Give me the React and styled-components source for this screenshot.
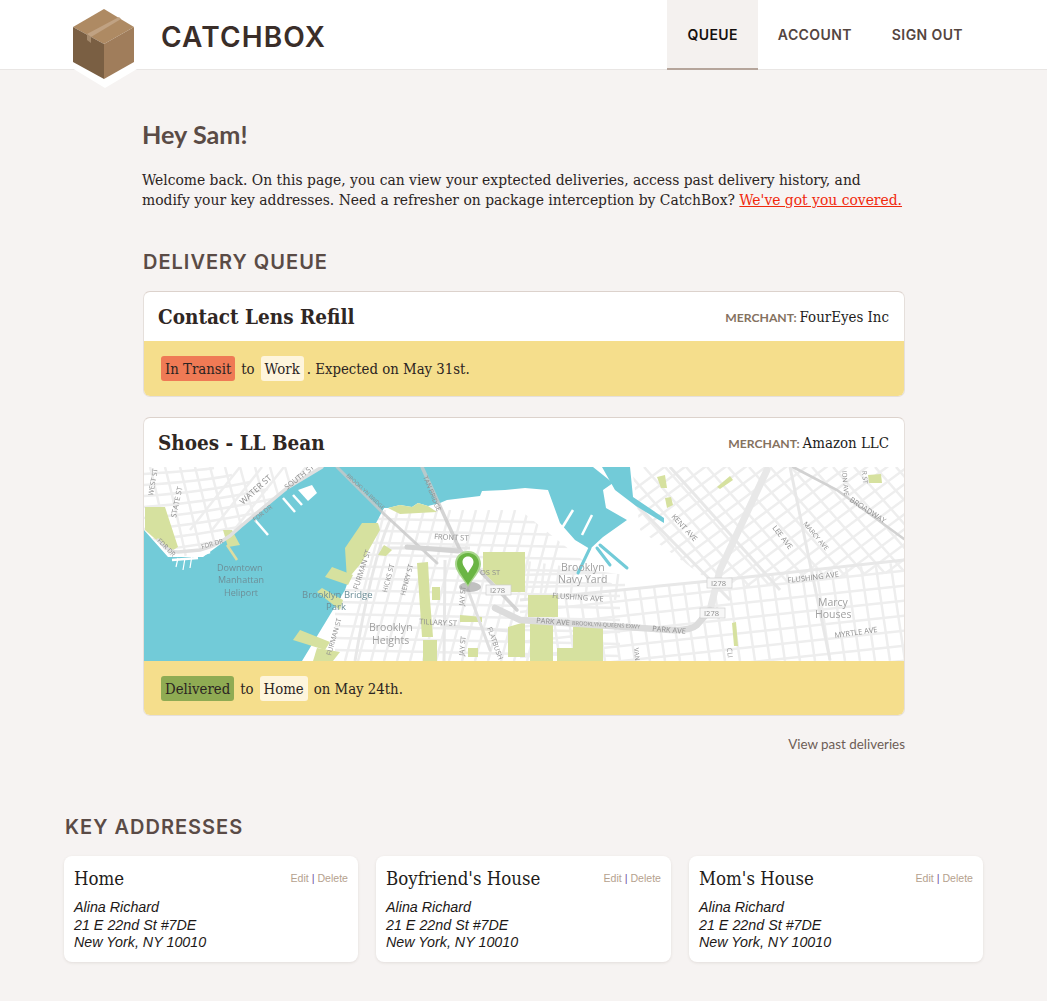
import React from "react";
import styled, { createGlobalStyle } from "styled-components";

const SLAB = `"DejaVu Serif Condensed", "DejaVu Serif", serif`;
const GEO = `"Inter", "Liberation Sans", sans-serif`;

const Global = createGlobalStyle`
  html, body { margin: 0; padding: 0; background: #f6f3f2; }
  body { font-family: ${SLAB}; color: #2f2724; }
`;

const Header = styled.header`
  position: relative;
  z-index: 2;
  height: 70px;
  box-sizing: border-box;
  padding: 0 64px;
  background: #fff;
  border-bottom: 1px solid #e9e6e4;
  display: flex;
  justify-content: space-between;
`;
const Brand = styled.div`
  display: flex;
  align-items: flex-start;
  gap: 22px;
`;
const Logo = styled.svg`
  width: 75px;
  height: 88px;
  flex: none;
  display: block;
`;
const BrandName = styled.div`
  font-family: ${GEO};
  font-size: 28px;
  font-weight: 600;
  letter-spacing: 1.15px;
  color: #3a2e29;
  line-height: 74px;
`;
const Nav = styled.nav`
  display: flex;
  height: 70px;
`;
const NavItem = styled.a`
  display: flex;
  align-items: center;
  box-sizing: border-box;
  padding: 0 20px;
  height: 70px;
  font-family: ${GEO};
  font-size: 14px;
  font-weight: 600;
  letter-spacing: 0.4px;
  color: ${(p) => (p.$active ? "#15100e" : "#54453f")};
  background: ${(p) => (p.$active ? "#f4f1ef" : "transparent")};
  border-bottom: 2px solid ${(p) => (p.$active ? "#b5a59b" : "transparent")};
`;
const Main = styled.main`
  width: 763px;
  margin-left: 142px;
  padding-top: 49px;
`;
const Greeting = styled.h1`
  margin: 0;
  font-family: "Lato", sans-serif;
  font-size: 25.2px;
  line-height: 30px;
  font-weight: 700;
  color: #5a4b46;
`;
const Intro = styled.p`
  margin: 21px 0 0;
  font-size: 15.45px;
  line-height: 20px;
  color: #2b2422;
  width: 763px;
`;
const RedLink = styled.a`
  color: #f0290d;
  text-decoration: underline;
`;
const SectionTitle = styled.h2`
  margin: ${(p) => p.$top}px 0 0 1px;
  font-family: ${GEO};
  font-size: 20px;
  line-height: 26px;
  font-weight: 600;
  letter-spacing: 1px;
  color: #5a4b46;
`;
const Card = styled.section`
  margin: ${(p) => p.$top}px 0 0 1px;
  border-radius: 7px;
  border: 1px solid #e5dfdb;
  border-top-color: #dcd2cc;
  overflow: hidden;
  background: #fff;
  width: 762px;
  box-sizing: border-box;
`;
const CardHead = styled.div`
  height: 49px;
  padding: 0 15px 0 14px;
  display: flex;
  align-items: center;
  justify-content: space-between;
`;
const CardTitle = styled.h3`
  margin: 0;
  font-size: 20.5px;
  font-weight: 700;
  color: #2f2724;
`;
const Merchant = styled.div`
  font-size: 14.9px;
  color: #221c1a;
`;
const MerchantLabel = styled.span`
  font-family: "Lato", sans-serif;
  font-size: 12.2px;
  font-weight: 700;
  color: #85725f;
  margin-right: 3px;
`;
const Band = styled.div`
  height: ${(p) => p.$h}px;
  padding-left: 17px;
  background: #f5de8c;
  display: flex;
  align-items: center;
  font-size: 14.8px;
  color: #2b2422;
`;
const Pill = styled.span`
  display: inline-flex;
  align-items: center;
  height: 25px;
  padding: 0 4px;
  border-radius: 3px;
  background: ${(p) => p.$bg};
  margin-right: ${(p) => p.$after}px;
`;
const To = styled.span`
  margin-right: 6px;
`;
const MapBox = styled.svg`
  width: 760px;
  height: 194px;
  display: block;
`;
const PastLink = styled.a`
  display: block;
  text-align: right;
  margin-top: 19px;
  font-family: "Lato", sans-serif;
  font-size: 13.4px;
  line-height: 18px;
  color: #6d5d56;
`;
const AddressSection = styled.section`
  padding: 0 64px 39px;
`;
const AddressGrid = styled.div`
  margin-top: 16px;
  display: grid;
  grid-template-columns: 294px 295px 294px;
  column-gap: 18px;
`;
const AddressCard = styled.article`
  height: 106px;
  box-sizing: border-box;
  padding: 10px;
  background: #fff;
  border-radius: 8px;
  box-shadow: 0 1px 3px rgba(90, 70, 60, 0.12);
`;
const AddressHead = styled.div`
  display: flex;
  justify-content: space-between;
  align-items: center;
  height: 24px;
`;
const AddressName = styled.h4`
  margin: 0;
  font-size: 18.5px;
  font-weight: 400;
  color: #221c1a;
`;
const Actions = styled.div`
  font-family: "Liberation Sans", sans-serif;
  font-size: 10.6px;
  color: #6b4fa0;
`;
const Action = styled.a`
  color: #b5a18e;
`;
const AddressLines = styled.address`
  margin-top: 9px;
  font-family: "Liberation Sans", sans-serif;
  font-style: italic;
  font-size: 14.3px;
  line-height: 17.5px;
  color: #1d1917;
`;
const MapLabel = styled.text`
  font-family: "Open Sans", sans-serif;
  fill: #8f8f8f;
`;
const PlaceLabel = styled.text`
  font-family: "Open Sans", sans-serif;
`;

const range = (n, f) => Array.from({ length: n }, (_, i) => f(i));
const ROAD = "#eeeeee";
const PARK = "#d6e19f";
const WATER = "#72cbd8";

const parks = [
  "145,507 165,507 178,547 170,552 145,530",
  "345,548 362,523 378,523 380,530 362,562 347,580",
  "325,577 332,567 353,575 348,585",
  "317,592 322,588 343,600 340,610",
  "293,640 300,630 330,642 325,650",
  "313,661 317,648 340,652 333,661",
  "388,508 400,505 412,507 418,503 428,506 437,512 400,514",
  "378,555 384,545 392,550 386,556",
  "417,563 428,562 430,600 433,637 422,637",
  "423,640 437,640 437,661 423,661",
  "432,587 440,587 440,600 432,600",
  "483,552 525,552 525,592 503,592 483,572",
  "528,595 558,595 558,617 528,617",
  "530,623 553,623 553,661 530,661",
  "573,627 603,627 603,661 573,661",
  "557,648 575,648 575,661 557,661",
  "460,615 482,617 482,622 460,622",
  "468,648 478,648 478,657 468,657",
  "508,627 525,622 525,657 508,657",
  "657,477 665,475 667,488 661,488",
  "665,498 671,497 673,505 667,508",
  "717,487 730,476 733,480 720,489",
  "868,475 881,474 882,483 869,483",
  "732,623 736,622 738,646 734,646",
  "223,530 232,530 240,545 228,547",
];

const labels = [
  ["WEST ST", 153, 496, -80, 7],
  ["STATE ST", 176, 518, -78, 7.5],
  ["WATER ST", 243, 505, -42, 8.5],
  ["SOUTH ST", 287, 490, -38, 7.5],
  ["FDR DR", 255, 522, -38, 6.5],
  ["FDR DR", 202, 549, -16, 6.5],
  ["FDR DR", 157, 541, 45, 6.5],
  ["BROOKLYN BRIDGE", 346, 476, 43, 5.5],
  ["TAN BRIDGE", 423, 477, 68, 6.5],
  ["FRONT ST", 434, 539, 3, 7.5],
  ["OS ST", 480, 575, 0, 7.5],
  ["FURMAN ST", 358, 590, -72, 7.5],
  ["FURMAN ST", 331, 656, -74, 7],
  ["HICKS ST", 387, 593, -75, 7],
  ["HENRY ST", 405, 596, -75, 7],
  ["JAY ST", 464, 606, -85, 7],
  ["JAY ST", 464, 656, -85, 7],
  ["TILLARY ST", 419, 624, 3, 7.5],
  ["FLATBUSH", 487, 628, 70, 7],
  ["KENT AVE", 671, 517, 47, 7.5],
  ["LEE AVE", 772, 528, 52, 7.5],
  ["MARCY AVE", 803, 524, 50, 6.5],
  ["BROADWAY", 849, 501, 33, 7.5],
  ["ION AVE", 842, 471, 85, 6.5],
  ["R ST", 862, 471, 85, 6.5],
  ["FLUSHING AVE", 788, 583, -7, 7.5],
  ["FLUSHING AVE", 552, 598, 4, 7.5],
  ["PARK AVE", 536, 623, 4, 7.5],
  ["BROOKLYN-QUEENS EXWY", 572, 625, 3, 5.5],
  ["PARK AVE", 652, 631, 5, 7.5],
  ["MYRTLE AVE", 835, 638, -8, 7.5],
  ["VAN", 634, 648, 85, 6.5],
  ["CLI", 727, 648, 85, 7],
];

const places = [
  ["Brooklyn", 561, 571, 10.5, "#a0a0a0"],
  ["Navy Yard", 558, 583, 10.5, "#a0a0a0"],
  ["Brooklyn", 369, 631, 10.5, "#a0a0a0"],
  ["Heights", 372, 644, 10.5, "#a0a0a0"],
  ["Marcy", 818, 606, 10.5, "#a0a0a0"],
  ["Houses", 815, 618, 10.5, "#a0a0a0"],
  ["Downtown", 217, 571, 9, "#6d8f98"],
  ["Manhattan", 218, 583, 9, "#6d8f98"],
  ["Heliport", 224, 596, 9, "#6d8f98"],
  ["Brooklyn Bridge", 302, 598, 9.5, "#6d8f98"],
  ["Park", 326, 610, 9.5, "#6d8f98"],
];

const shields = [
  [486, 593],
  [707, 586],
  [700, 616],
];

const StreetMap = () => (
  <MapBox viewBox="144 467 760 194" role="img" aria-label="Delivery map">
    <defs>
      <clipPath id="upperRight">
        <polygon points="632,467 904,467 904,572 722,590 640,530" />
      </clipPath>
      <clipPath id="lowerRight">
        <polygon points="520,600 904,562 904,661 520,661" />
      </clipPath>
      <clipPath id="heights">
        <polygon points="340,510 520,510 620,590 620,661 330,661" />
      </clipPath>
      <clipPath id="navy">
        <polygon points="520,560 625,575 625,600 520,600" />
      </clipPath>
      <clipPath id="manhattan">
        <polygon points="144,467 330,467 240,535 175,560 144,530" />
      </clipPath>
      <filter id="soft">
        <feGaussianBlur stdDeviation="0.4" />
      </filter>
    </defs>
    <rect x="144" y="467" width="760" height="194" fill="#fff" />
    <g filter="url(#soft)">
      <g stroke={ROAD} strokeWidth="2.5" fill="none">
        <g clipPath="url(#manhattan)">
          {range(10, (i) => (
            <path key={i} d={`M${150 + i * 15} 467 q 8 30 ${20 + i} 90`} />
          ))}
          {range(8, (i) => (
            <path key={i} d={`M144 ${474 + i * 11} q 60 -4 ${70 + i * 18} -${6 + i * 4}`} />
          ))}
          {range(6, (i) => (
            <path key={i} d={`M${190 + i * 22} 530 L${240 + i * 22} 467`} />
          ))}
        </g>
        <g clipPath="url(#heights)">
          {range(15, (i) => (
            <line key={i} x1={385 + i * 13} y1="510" x2={345 + i * 13} y2="661" />
          ))}
          {range(13, (i) => (
            <line key={i} x1="335" y1={518 + i * 12} x2="620" y2={524 + i * 12} />
          ))}
        </g>
        <g clipPath="url(#navy)">
          {range(7, (i) => (
            <line key={i} x1={530 + i * 15} y1="560" x2={525 + i * 15} y2="600" />
          ))}
          <line x1="520" y1="587" x2="625" y2="585" />
          <line x1="520" y1="575" x2="625" y2="572" />
        </g>
        <g clipPath="url(#upperRight)">
          {range(18, (i) => (
            <line key={i} x1={560 + i * 21} y1="467" x2={695 + i * 21} y2="620" />
          ))}
          {range(28, (i) => (
            <line key={i} x1="620" y1={500 + i * 15} x2="910" y2={285 + i * 15} />
          ))}
        </g>
        <g clipPath="url(#lowerRight)">
          {range(26, (i) => (
            <line key={i} x1={530 + i * 15} y1="560" x2={545 + i * 15} y2="661" />
          ))}
          {range(8, (i) => (
            <line key={i} x1="520" y1={612 + i * 15} x2="910" y2={570 + i * 15} />
          ))}
        </g>
      </g>
      <g stroke="#e8e8e8" strokeWidth="3" fill="none">
        <line x1="622" y1="490" x2="730" y2="600" />
        <line x1="670" y1="467" x2="780" y2="590" />
        <line x1="790" y1="467" x2="830" y2="660" />
        <line x1="520" y1="600" x2="720" y2="580" />
        <line x1="720" y1="580" x2="904" y2="560" />
        <line x1="380" y1="548" x2="470" y2="548" />
        <line x1="440" y1="625" x2="520" y2="632" />
        <path d="M390 520 Q372 560 355 661" />
        <line x1="445" y1="560" x2="444" y2="661" />
      </g>
      <polygon
        fill={WATER}
        points="322,467 593,467 613,483 603,490 606,508 627,520 603,537 590,549 575,540 560,523 548,490 525,488 505,490 482,491 480,496 447,500 440,503 428,506 418,503 412,507 400,505 388,508 384,508 375,525 352,570 345,590 302,661 144,661 144,530 168,557 203,557 222,543 237,530 287,488"
      />
      <polygon fill={WATER} points="602,467 630,467 633,497 664,518 664,523 636,506 615,490" />
      <g stroke={WATER} strokeWidth="3" strokeLinecap="round">
        <line x1="600" y1="545" x2="627" y2="568" />
        <line x1="597" y1="548" x2="610" y2="565" />
        <line x1="590" y1="548" x2="578" y2="573" />
      </g>
      <g stroke="#fff" strokeWidth="2.5">
        <line x1="283" y1="498" x2="295" y2="512" />
        <line x1="293" y1="495" x2="302" y2="505" />
        <line x1="255" y1="520" x2="268" y2="535" />
        <line x1="197" y1="556" x2="210" y2="552" />
        <line x1="172" y1="560" x2="198" y2="558" />
        <line x1="192" y1="555" x2="190" y2="568" strokeWidth="1.2" />
        <line x1="185" y1="558" x2="183" y2="570" strokeWidth="1.2" />
        <line x1="178" y1="558" x2="176" y2="567" strokeWidth="1.2" />
        <line x1="573" y1="510" x2="562" y2="528" />
        <line x1="592" y1="515" x2="582" y2="535" />
      </g>
      <polygon fill="#fff" points="298,490 312,485 317,493 308,501" />
      {parks.map((p, i) => (
        <polygon key={i} points={p} fill={PARK} />
      ))}
      <line x1="227" y1="545" x2="237" y2="560" stroke="#dfdca0" strokeWidth="2.5" />
      <g fill="none" strokeLinecap="round">
        <path d="M322 467 L287 488 L240 527 Q222 545 200 550 L178 552 Q168 552 158 540" stroke="#e0e0e0" strokeWidth="3.5" />
        <path d="M337 467 L383 513 L437 563" stroke="#c8c8c8" strokeWidth="3" opacity="0.8" />
        <path d="M422 467 L460 550 L517 610" stroke="#c9c9c9" strokeWidth="3.5" opacity="0.8" />
        <path d="M407 547 L458 551" stroke="#d4d4d4" strokeWidth="5" />
        <path d="M767 470 L720 570 L710 610" stroke="#e8e8e8" strokeWidth="7" />
        <path d="M710 610 L697 625 Q690 631 670 630 L520 620 L495 608" stroke="#dcdcdc" strokeWidth="6.5" />
        <path d="M793 467 L837 490 L904 539" stroke="#d2d2d2" strokeWidth="2.6" />
        <path d="M468 590 L490 650" stroke="#e0e0e0" strokeWidth="3" />
      </g>
    </g>
    {labels.map(([t, x, y, r, s], i) => (
      <MapLabel key={i} x={x} y={y} fontSize={s} transform={`rotate(${r} ${x} ${y})`}>
        {t}
      </MapLabel>
    ))}
    {places.map(([t, x, y, s, c], i) => (
      <PlaceLabel key={i} x={x} y={y} fontSize={s} fill={c}>
        {t}
      </PlaceLabel>
    ))}
    {shields.map(([x, y], i) => (
      <g key={i}>
        <rect x={x} y={y - 8} width="25" height="10" fill="#f7f7f7" stroke="#cfcfcf" strokeWidth="0.7" />
        <MapLabel x={x + 4} y={y} fontSize="7.5">
          I278
        </MapLabel>
      </g>
    ))}
    <ellipse cx="470" cy="587" rx="11" ry="5" fill="#8c8c8c" opacity="0.55" filter="url(#soft)" />
    <path
      d="M468 551 C459.5 551 455 557.5 455 564 C455 571 463 579 468 587 C473 579 481 571 481 564 C481 557.5 476.5 551 468 551 Z"
      fill="#a9d68e"
    />
    <path
      d="M468 553 C461 553 457 558 457 564 C457 570.5 464 578 468 585 C472 578 479 570.5 479 564 C479 558 475 553 468 553 Z"
      fill="#6ab544"
    />
    <path
      d="M468 556.5 C464.5 556.5 462.5 559 462.5 562 C462.5 565.5 466 569 468 573 C470 569 473.5 565.5 473.5 562 C473.5 559 471.5 556.5 468 556.5 Z"
      fill="#fff"
    />
  </MapBox>
);

const addresses = ["Home", "Boyfriend's House", "Mom's House"];

export default function App() {
  return (
    <>
      <Global />
      <Header>
        <Brand>
          <Logo viewBox="64 0 75 88">
            <polygon points="72,68 105,88 137,69 140,20 104,3 68,20" fill="#fff" />
            <polygon points="104,9 134,27 104,44 73,27" fill="#ae8a63" />
            <polygon points="73,27 104,44 104,79 73,62" fill="#7a5f43" />
            <polygon points="134,27 134,62 104,79 104,44" fill="#a07d5b" />
            <polygon points="87,34 119,17 121,19 91,37" fill="#c0a283" />
            <polygon points="87,34 91,37 91,43 87,40" fill="#a58a6d" />
          </Logo>
          <BrandName>CATCHBOX</BrandName>
        </Brand>
        <Nav>
          <NavItem $active>QUEUE</NavItem>
          <NavItem>ACCOUNT</NavItem>
          <NavItem>SIGN OUT</NavItem>
        </Nav>
      </Header>
      <Main>
        <Greeting>Hey Sam!</Greeting>
        <Intro>
          Welcome back. On this page, you can view your exptected deliveries, access past delivery history, and
          modify your key addresses. Need a refresher on package interception by CatchBox?{" "}
          <RedLink>We've got you covered.</RedLink>
        </Intro>
        <SectionTitle $top={39}>DELIVERY QUEUE</SectionTitle>
        <Card $top={16}>
          <CardHead>
            <CardTitle>Contact Lens Refill</CardTitle>
            <Merchant>
              <MerchantLabel>MERCHANT:</MerchantLabel>FourEyes Inc
            </Merchant>
          </CardHead>
          <Band $h={55}>
            <Pill $bg="#ef7a55" $after={6}>In Transit</Pill>
            <To>to</To>
            <Pill $bg="#fef5dc" $after={3}>Work</Pill>. Expected on May 31st.
          </Band>
        </Card>
        <Card $top={20}>
          <CardHead>
            <CardTitle>Shoes - LL Bean</CardTitle>
            <Merchant>
              <MerchantLabel>MERCHANT:</MerchantLabel>Amazon LLC
            </Merchant>
          </CardHead>
          <StreetMap />
          <Band $h={54}>
            <Pill $bg="#8fab53" $after={6}>Delivered</Pill>
            <To>to</To>
            <Pill $bg="#fef5dc" $after={6}>Home</Pill>on May 24th.
          </Band>
        </Card>
        <PastLink>View past deliveries</PastLink>
      </Main>
      <AddressSection>
        <SectionTitle $top={61}>KEY ADDRESSES</SectionTitle>
        <AddressGrid>
          {addresses.map((name) => (
            <AddressCard key={name}>
              <AddressHead>
                <AddressName>{name}</AddressName>
                <Actions>
                  <Action>Edit</Action> | <Action>Delete</Action>
                </Actions>
              </AddressHead>
              <AddressLines>
                Alina Richard
                <br />
                21 E 22nd St #7DE
                <br />
                New York, NY 10010
              </AddressLines>
            </AddressCard>
          ))}
        </AddressGrid>
      </AddressSection>
    </>
  );
}
